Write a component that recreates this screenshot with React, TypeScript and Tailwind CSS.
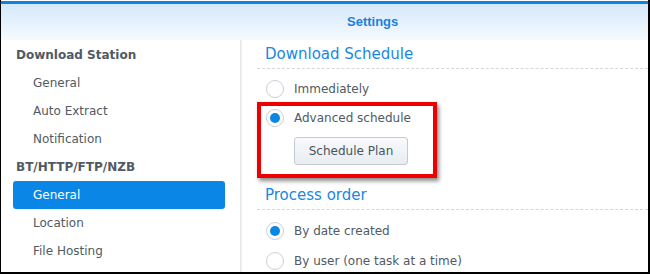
import React from "react";

const font = { fontFamily: '"DejaVu Sans", Verdana, sans-serif' };

function Radio({ checked }: { checked?: boolean }) {
  return (
    <span className="flex h-[18px] w-[18px] items-center justify-center rounded-full border border-[#c9d0d8] bg-white">
      {checked && <span className="h-[10px] w-[10px] rounded-full bg-[#0a87e6]" />}
    </span>
  );
}

function SideItem({ label, bold, active }: { label: string; bold?: boolean; active?: boolean }) {
  if (bold)
    return (
      <div className="flex h-[28px] items-center pl-[15px] text-[12px] font-bold text-[#505a64]">{label}</div>
    );
  return (
    <div
      className={
        "flex h-[28px] items-center pl-[20px] text-[12px] ml-[12px] mr-[15px] rounded-[3px] " +
        (active ? "bg-[#0a87e6] text-white" : "text-[#505a64]")
      }
    >
      {label}
    </div>
  );
}

export default function App() {
  return (
    <div className="w-[650px] h-[274px] overflow-hidden bg-white" style={font}>
      <div className="flex h-full flex-col border-l border-r-2 border-b-2 border-black pt-px">
        <div className="h-[3px] bg-[#0a84e0]" />
        <div
          className="flex h-[36px] items-center bg-gradient-to-b from-[#d4e8fb] to-[#f6fafe] pl-[346px] text-[13px] font-bold text-[#1c7fdb]"
          style={{ fontFamily: '"Liberation Sans", Arial, sans-serif' }}
        >
          Settings
        </div>
        <div className="flex flex-1">
          <div className="w-[239px] shrink-0 pt-px">
            <SideItem label="Download Station" bold />
            <SideItem label="General" />
            <SideItem label="Auto Extract" />
            <SideItem label="Notification" />
            <SideItem label="BT/HTTP/FTP/NZB" bold />
            <SideItem label="General" active />
            <SideItem label="Location" />
            <SideItem label="File Hosting" />
          </div>
          <div className="w-[2px] bg-gradient-to-r from-[#e2e4e6] to-[#f2f3f4]" />
          <div className="relative flex-1 pl-[15px] text-[12px] text-[#505a64]">
            <div className="flex h-[28px] items-center pl-[8px] pt-px text-[15px] text-[#1a87e2]">Download Schedule</div>
            <div className="border-t border-dashed border-[#d4d8dc]" />
            <div className="mt-[11px] flex h-[18px] items-center gap-[10px] pl-[9px]">
              <Radio />
              <span>Immediately</span>
            </div>
            <div className="mt-[11px] flex h-[18px] items-center gap-[10px] pl-[9px]">
              <Radio checked />
              <span>Advanced schedule</span>
            </div>
            <div className="mt-[10px] pl-[37px]">
              <div className="flex h-[28px] w-[114px] items-center justify-center rounded-[3px] border border-[#c3cad2] bg-gradient-to-b from-[#f8fafc] to-[#e8edf2] text-[12px] text-[#4a545e]">
                Schedule Plan
              </div>
            </div>
            <div className="mt-[16px] flex h-[28px] items-center pl-[8px] text-[15px] text-[#1a87e2]">Process order</div>
            <div className="border-t border-dashed border-[#d4d8dc]" />
            <div className="mt-[12px] flex h-[18px] items-center gap-[10px] pl-[9px]">
              <Radio checked />
              <span>By date created</span>
            </div>
            <div className="mt-[12px] flex h-[18px] items-center gap-[10px] pl-[9px]">
              <Radio />
              <span>By user (one task at a time)</span>
            </div>
            <div className="absolute left-[15px] top-[62px] h-[76px] w-[180px] border-[4px] border-[#ee0000] shadow-[2px_3px_4px_rgba(0,0,0,0.45)]" />
          </div>
        </div>
      </div>
    </div>
  );
}
